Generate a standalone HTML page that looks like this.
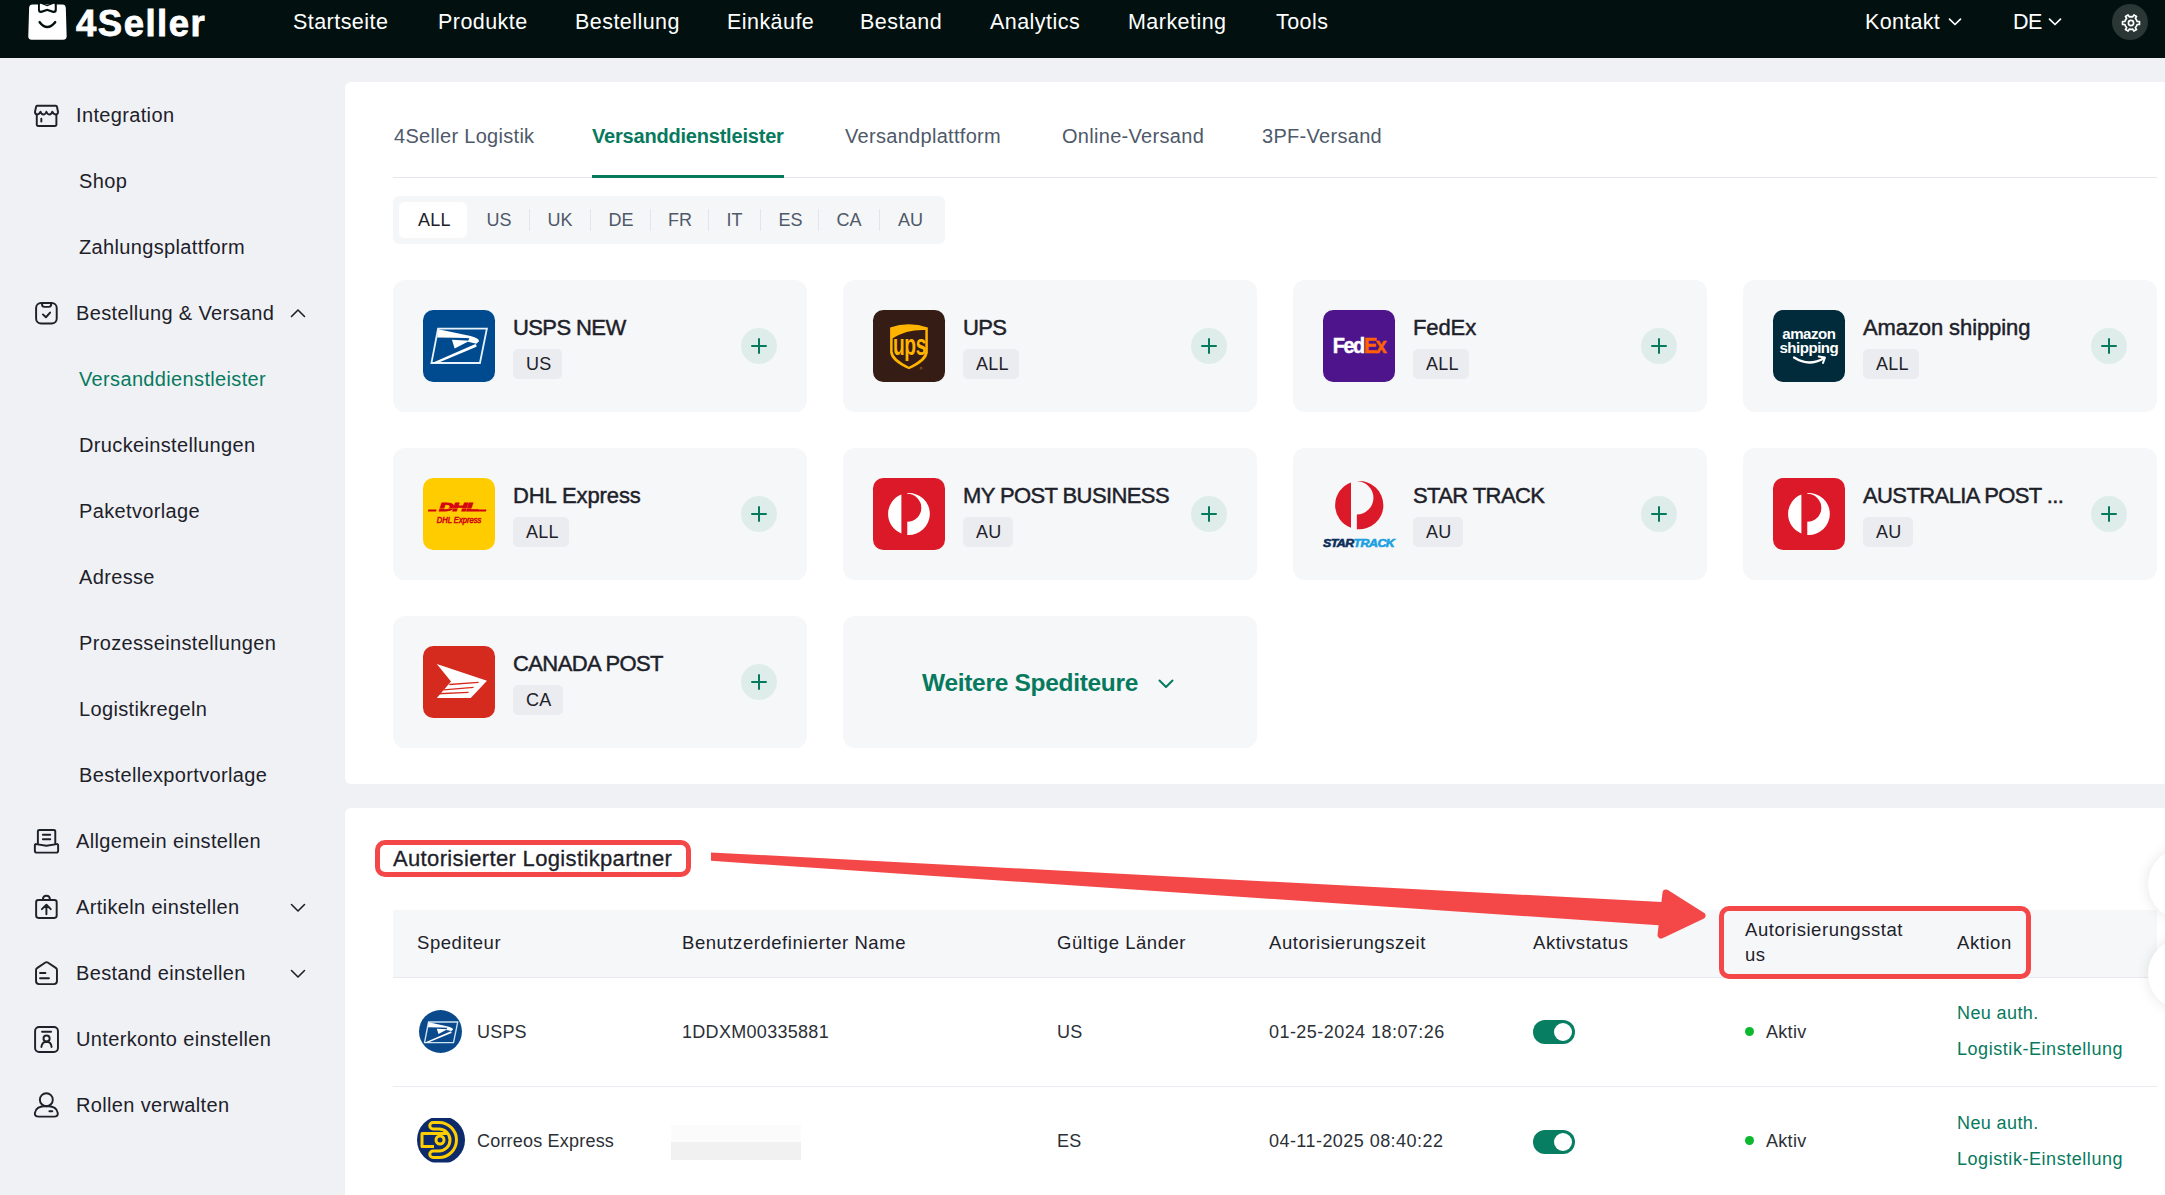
<!DOCTYPE html><html><head><meta charset="utf-8"><style>
html,body{margin:0;padding:0;}
body{width:2165px;height:1195px;overflow:hidden;position:relative;background:#f0f1f5;font-family:"Liberation Sans",sans-serif;}
.t{position:absolute;line-height:1;white-space:nowrap;}
.r{position:absolute;}
.s{position:absolute;overflow:visible;}
</style></head><body>
<div class="r" style="left:0px;top:0px;width:2165px;height:58px;background:#02110f;border-radius:0px;"></div>
<svg class="s" style="left:20px;top:0px;" width="60" height="50" viewBox="0 0 1434 1195">
<path d="M300,110 L1010,110 Q1090,110 1095,190 L1115,860 Q1118,950 1030,950 L280,950 Q195,950 198,860 L218,190 Q222,110 300,110 Z" fill="#fff"/>
<path d="M430,110 Q430,55 490,68 L650,118 L810,68 Q880,55 880,110 L880,235 Q880,320 790,312 L650,262 L510,312 Q430,320 430,235 Z" fill="#02110f"/>
<path d="M495,92 L650,150 L805,92 Q830,90 830,115 L830,230 Q830,262 800,256 L650,212 L500,256 Q475,262 475,230 L475,115 Q475,90 495,92 Z" fill="#fff"/>
<path d="M470,530 Q650,760 840,530" fill="none" stroke="#02110f" stroke-width="60" stroke-linecap="round"/>
</svg>
<div class="t" style="left:76px;top:6px;font-size:36.5px;color:#fff;font-weight:700;letter-spacing:1.5px;-webkit-text-stroke:0.8px #fff;">4Seller</div>
<div class="t" style="left:293px;top:12px;font-size:21.5px;color:#fff;letter-spacing:0.45px;">Startseite</div>
<div class="t" style="left:438px;top:12px;font-size:21.5px;color:#fff;letter-spacing:0.45px;">Produkte</div>
<div class="t" style="left:575px;top:12px;font-size:21.5px;color:#fff;letter-spacing:0.45px;">Bestellung</div>
<div class="t" style="left:727px;top:12px;font-size:21.5px;color:#fff;letter-spacing:0.45px;">Einkäufe</div>
<div class="t" style="left:860px;top:12px;font-size:21.5px;color:#fff;letter-spacing:0.45px;">Bestand</div>
<div class="t" style="left:990px;top:12px;font-size:21.5px;color:#fff;letter-spacing:0.45px;">Analytics</div>
<div class="t" style="left:1128px;top:12px;font-size:21.5px;color:#fff;letter-spacing:0.45px;">Marketing</div>
<div class="t" style="left:1276px;top:12px;font-size:21.5px;color:#fff;letter-spacing:0.45px;">Tools</div>
<div class="t" style="left:1865px;top:12px;font-size:21.5px;color:#fff;letter-spacing:0.3px;">Kontakt</div>
<div class="t" style="left:2013px;top:12px;font-size:21.5px;color:#fff;letter-spacing:-0.5px;">DE</div>
<svg class="s" style="left:1948px;top:18px;" width="14" height="8" viewBox="0 0 14 8"><path d="M1.5,1.2 L7,6.5 L12.5,1.2" fill="none" stroke="#fff" stroke-width="1.7" stroke-linecap="round" stroke-linejoin="round"/></svg>
<svg class="s" style="left:2048px;top:18px;" width="14" height="8" viewBox="0 0 14 8"><path d="M1.5,1.2 L7,6.5 L12.5,1.2" fill="none" stroke="#fff" stroke-width="1.7" stroke-linecap="round" stroke-linejoin="round"/></svg>
<div class="r" style="left:2112px;top:4px;width:36px;height:36px;background:#2a3734;border-radius:18px;"></div>
<svg class="s" style="left:2120.5px;top:12.5px;" width="20" height="20" viewBox="0 0 20 20"><path d="M15.46,6.85 L16.11,8.48 L18.47,8.51 L18.47,11.49 L16.11,11.52 L15.46,13.15 L14.38,14.53 L15.53,16.59 L12.94,18.08 L11.74,16.06 L10.00,16.30 L8.26,16.06 L7.06,18.08 L4.47,16.59 L5.62,14.53 L4.54,13.15 L3.89,11.52 L1.53,11.49 L1.53,8.51 L3.89,8.48 L4.54,6.85 L5.62,5.47 L4.47,3.41 L7.06,1.92 L8.26,3.94 L10.00,3.70 L11.74,3.94 L12.94,1.92 L15.53,3.41 L14.38,5.47 Z" fill="none" stroke="#fff" stroke-width="1.7" stroke-linejoin="round"/><circle cx="10" cy="10" r="2.6" fill="none" stroke="#fff" stroke-width="1.7"/></svg>
<div class="t" style="left:76px;top:105px;font-size:20px;color:#1d2129;letter-spacing:0.35px;">Integration</div>
<svg class="s" style="left:28px;top:95px;" width="40" height="40" viewBox="0 0 1195 1195"><path d="M270,320 L830,320 Q860,320 868,360 L895,500 Q905,570 830,580 Q760,585 725,500 Q700,580 640,585 Q580,585 550,500 Q520,585 460,585 Q400,580 375,500 Q340,585 270,580 Q200,570 210,500 L240,360 Q248,320 270,320 Z" fill="none" stroke="#1d2129" stroke-width="58" stroke-linecap="round" stroke-linejoin="round"/><path d="M262,590 L262,880 Q262,925 310,925 L800,925 Q848,925 848,880 L848,590" fill="none" stroke="#1d2129" stroke-width="58" stroke-linecap="round" stroke-linejoin="round"/><path d="M398,712 L398,790" fill="none" stroke="#1d2129" stroke-width="58" stroke-linecap="round" stroke-linejoin="round"/></svg>
<div class="t" style="left:79px;top:171px;font-size:20px;color:#1d2129;letter-spacing:0.35px;">Shop</div>
<div class="t" style="left:79px;top:237px;font-size:20px;color:#1d2129;letter-spacing:0.35px;">Zahlungsplattform</div>
<div class="t" style="left:76px;top:303px;font-size:20px;color:#1d2129;letter-spacing:0.35px;">Bestellung &amp; Versand</div>
<svg class="s" style="left:28px;top:295px;" width="40" height="40" viewBox="0 0 1195 1195"><rect x="242" y="237" width="616" height="616" rx="150" fill="none" stroke="#1d2129" stroke-width="58" stroke-linecap="round" stroke-linejoin="round"/><path d="M420,240 L420,285 Q420,355 490,355 L620,355 Q690,355 690,285 L690,240" fill="none" stroke="#1d2129" stroke-width="58" stroke-linecap="round" stroke-linejoin="round"/><path d="M445,580 L535,665 L660,525" fill="none" stroke="#1d2129" stroke-width="58" stroke-linecap="round" stroke-linejoin="round"/></svg>
<div class="t" style="left:79px;top:369px;font-size:20px;color:#077a5e;letter-spacing:0.35px;">Versanddienstleister</div>
<div class="t" style="left:79px;top:435px;font-size:20px;color:#1d2129;letter-spacing:0.35px;">Druckeinstellungen</div>
<div class="t" style="left:79px;top:501px;font-size:20px;color:#1d2129;letter-spacing:0.35px;">Paketvorlage</div>
<div class="t" style="left:79px;top:567px;font-size:20px;color:#1d2129;letter-spacing:0.35px;">Adresse</div>
<div class="t" style="left:79px;top:633px;font-size:20px;color:#1d2129;letter-spacing:0.35px;">Prozesseinstellungen</div>
<div class="t" style="left:79px;top:699px;font-size:20px;color:#1d2129;letter-spacing:0.35px;">Logistikregeln</div>
<div class="t" style="left:79px;top:765px;font-size:20px;color:#1d2129;letter-spacing:0.35px;">Bestellexportvorlage</div>
<div class="t" style="left:76px;top:831px;font-size:20px;color:#1d2129;letter-spacing:0.35px;">Allgemein einstellen</div>
<svg class="s" style="left:28px;top:820px;" width="40" height="40" viewBox="0 0 1195 1195"><path d="M295,700 L295,345 Q295,300 345,300 L765,300 Q815,300 815,345 L815,700" fill="none" stroke="#1d2129" stroke-width="58" stroke-linecap="round" stroke-linejoin="round"/><path d="M445,442 L665,442 M445,577 L665,577" fill="none" stroke="#1d2129" stroke-width="58" stroke-linecap="round" stroke-linejoin="round"/><path d="M240,720 L550,770 L860,720 Q900,715 900,760 L900,920 Q900,975 845,975 L260,975 Q205,975 205,920 L205,760 Q205,715 240,720 Z" fill="none" stroke="#1d2129" stroke-width="58" stroke-linecap="round" stroke-linejoin="round"/></svg>
<div class="t" style="left:76px;top:897px;font-size:20px;color:#1d2129;letter-spacing:0.35px;">Artikeln einstellen</div>
<svg class="s" style="left:28px;top:886px;" width="40" height="40" viewBox="0 0 1195 1195"><rect x="243" y="420" width="614" height="535" rx="70" fill="none" stroke="#1d2129" stroke-width="58" stroke-linecap="round" stroke-linejoin="round"/><path d="M445,410 Q445,290 550,290 Q655,290 655,410" fill="none" stroke="#1d2129" stroke-width="58" stroke-linecap="round" stroke-linejoin="round"/><path d="M550,845 L550,575 M415,690 L550,560 L680,690" fill="none" stroke="#1d2129" stroke-width="58" stroke-linecap="round" stroke-linejoin="round"/></svg>
<div class="t" style="left:76px;top:963px;font-size:20px;color:#1d2129;letter-spacing:0.35px;">Bestand einstellen</div>
<svg class="s" style="left:28px;top:952px;" width="40" height="40" viewBox="0 0 1195 1195"><path d="M240,540 Q240,500 280,475 L520,315 Q555,292 590,315 L830,475 Q865,500 865,540 L865,870 Q865,960 775,960 L330,960 Q240,960 240,870 Z" fill="none" stroke="#1d2129" stroke-width="58" stroke-linecap="round" stroke-linejoin="round"/><path d="M360,627 L520,627 M360,785 L625,785" fill="none" stroke="#1d2129" stroke-width="58" stroke-linecap="round" stroke-linejoin="round"/></svg>
<div class="t" style="left:76px;top:1029px;font-size:20px;color:#1d2129;letter-spacing:0.35px;">Unterkonto einstellen</div>
<svg class="s" style="left:28px;top:1018px;" width="40" height="40" viewBox="0 0 1195 1195"><rect x="212" y="267" width="683" height="748" rx="120" fill="none" stroke="#1d2129" stroke-width="58" stroke-linecap="round" stroke-linejoin="round"/><path d="M420,410 L690,410" fill="none" stroke="#1d2129" stroke-width="58" stroke-linecap="round" stroke-linejoin="round"/><circle cx="555" cy="612" r="92" fill="none" stroke="#1d2129" stroke-width="58" stroke-linecap="round" stroke-linejoin="round"/><path d="M400,865 Q420,715 555,712 Q690,715 705,865" fill="none" stroke="#1d2129" stroke-width="58" stroke-linecap="round" stroke-linejoin="round"/></svg>
<div class="t" style="left:76px;top:1095px;font-size:20px;color:#1d2129;letter-spacing:0.35px;">Rollen verwalten</div>
<svg class="s" style="left:28px;top:1084px;" width="40" height="40" viewBox="0 0 1195 1195"><circle cx="548" cy="470" r="193" fill="none" stroke="#1d2129" stroke-width="58" stroke-linecap="round" stroke-linejoin="round"/><path d="M205,870 Q230,665 548,660 Q865,665 890,870 Q900,975 780,975 L320,975 Q195,975 205,870 Z" fill="none" stroke="#1d2129" stroke-width="58" stroke-linecap="round" stroke-linejoin="round"/><path d="M640,815 L725,815" fill="none" stroke="#1d2129" stroke-width="58" stroke-linecap="round" stroke-linejoin="round"/></svg>
<svg class="s" style="left:290px;top:308px;" width="16" height="10" viewBox="0 0 16 10"><path d="M1.5,8.5 L8,2 L14.5,8.5" fill="none" stroke="#1d2129" stroke-width="1.6" stroke-linecap="round" stroke-linejoin="round"/></svg>
<svg class="s" style="left:290px;top:903px;" width="16" height="10" viewBox="0 0 16 10"><path d="M1.5,1.5 L8,8 L14.5,1.5" fill="none" stroke="#1d2129" stroke-width="1.6" stroke-linecap="round" stroke-linejoin="round"/></svg>
<svg class="s" style="left:290px;top:969px;" width="16" height="10" viewBox="0 0 16 10"><path d="M1.5,1.5 L8,8 L14.5,1.5" fill="none" stroke="#1d2129" stroke-width="1.6" stroke-linecap="round" stroke-linejoin="round"/></svg>
<div class="r" style="left:345px;top:82px;width:1900px;height:702px;background:#fff;border-radius:6px;"></div>
<div class="t" style="left:394px;top:126px;font-size:20px;color:#4e5969;letter-spacing:0.3px;">4Seller Logistik</div>
<div class="t" style="left:592px;top:126px;font-size:20px;color:#077a5e;font-weight:700;letter-spacing:-0.2px;">Versanddienstleister</div>
<div class="t" style="left:845px;top:126px;font-size:20px;color:#4e5969;letter-spacing:0.3px;">Versandplattform</div>
<div class="t" style="left:1062px;top:126px;font-size:20px;color:#4e5969;letter-spacing:0.3px;">Online-Versand</div>
<div class="t" style="left:1262px;top:126px;font-size:20px;color:#4e5969;letter-spacing:0.3px;">3PF-Versand</div>
<div class="r" style="left:393px;top:177px;width:1764px;height:1px;background:#e5e6eb;border-radius:0px;"></div>
<div class="r" style="left:592px;top:175px;width:192px;height:3px;background:#077a5e;border-radius:0px;"></div>
<div class="r" style="left:393px;top:196px;width:552px;height:48px;background:#f5f6f8;border-radius:6px;"></div>
<div class="r" style="left:399px;top:202px;width:68px;height:36px;background:#fff;border-radius:6px;"></div>
<div class="t" style="left:418px;top:211px;font-size:18px;color:#1d2129;letter-spacing:0.3px;">ALL</div>
<div class="t" style="left:486.6px;top:211px;font-size:18px;color:#4e5969;">US</div>
<div class="t" style="left:547.4px;top:211px;font-size:18px;color:#4e5969;">UK</div>
<div class="t" style="left:608.5px;top:211px;font-size:18px;color:#4e5969;">DE</div>
<div class="t" style="left:668px;top:211px;font-size:18px;color:#4e5969;">FR</div>
<div class="t" style="left:726.5px;top:211px;font-size:18px;color:#4e5969;">IT</div>
<div class="t" style="left:778.6px;top:211px;font-size:18px;color:#4e5969;">ES</div>
<div class="t" style="left:836.6px;top:211px;font-size:18px;color:#4e5969;">CA</div>
<div class="t" style="left:898px;top:211px;font-size:18px;color:#4e5969;">AU</div>
<div class="r" style="left:528.5px;top:209px;width:1.2px;height:22px;background:#e2e4ee;border-radius:0px;"></div>
<div class="r" style="left:589.5px;top:209px;width:1.2px;height:22px;background:#e2e4ee;border-radius:0px;"></div>
<div class="r" style="left:649.5px;top:209px;width:1.2px;height:22px;background:#e2e4ee;border-radius:0px;"></div>
<div class="r" style="left:707.5px;top:209px;width:1.2px;height:22px;background:#e2e4ee;border-radius:0px;"></div>
<div class="r" style="left:759.5px;top:209px;width:1.2px;height:22px;background:#e2e4ee;border-radius:0px;"></div>
<div class="r" style="left:818.0px;top:209px;width:1.2px;height:22px;background:#e2e4ee;border-radius:0px;"></div>
<div class="r" style="left:878.9px;top:209px;width:1.2px;height:22px;background:#e2e4ee;border-radius:0px;"></div>
<div class="r" style="left:393px;top:280px;width:414px;height:132px;background:#f6f7f9;border-radius:12px;"></div>
<svg class="s" style="left:423px;top:310px;" width="72" height="72" viewBox="0 0 1195 1195"><rect width="1195" height="1195" rx="170" fill="#004b8f"/>
<path d="M250,310 L1060,310 L945,880 L140,880 Z" fill="none" stroke="#e8f2fb" stroke-width="30"/>
<path d="M255,318 L790,432 Q935,470 930,520 L885,560 L745,528 L770,468 Q700,456 235,455 Z" fill="#fff"/>
<path d="M150,880 L870,565 Q895,580 888,612 L245,880 Z" fill="#fff"/>
<path d="M480,495 L775,512 L525,640 Z" fill="#fff"/></svg>
<div class="t" style="left:513px;top:317px;font-size:22px;color:#1d2129;letter-spacing:-0.6px;-webkit-text-stroke:0.45px #1d2129;">USPS NEW</div>
<div class="r" style="left:513px;top:349px;width:49px;height:30px;background:#ebecf0;border-radius:5px;"></div>
<div class="t" style="left:526px;top:355px;font-size:18px;color:#1d2129;letter-spacing:0.2px;">US</div>
<div class="r" style="left:741px;top:328px;width:36px;height:36px;background:#deedea;border-radius:18px;"></div>
<div class="r" style="left:751px;top:345px;width:16px;height:2px;background:#077a5e;border-radius:1px;"></div>
<div class="r" style="left:758px;top:338px;width:2px;height:16px;background:#077a5e;border-radius:1px;"></div>
<div class="r" style="left:843px;top:280px;width:414px;height:132px;background:#f6f7f9;border-radius:12px;"></div>
<svg class="s" style="left:873px;top:310px;" width="72" height="72" viewBox="0 0 1195 1195"><rect width="1195" height="1195" rx="170" fill="#351c15"/>
<path d="M284,292 Q590,185 910,292 L910,700 Q900,850 597,985 Q294,850 284,700 Z" fill="#ffb500"/>
<path d="M326,470 Q560,320 868,332 L868,690 Q858,815 597,940 Q336,815 326,690 Z" fill="#351c15"/>
<text x="0" y="742" font-family="Liberation Sans" font-weight="700" font-size="480" fill="#ffb500" letter-spacing="-8" transform="translate(330 0) scale(0.665 1)">ups</text>
<circle cx="798" cy="966" r="16" fill="none" stroke="#ffb500" stroke-width="6"/></svg>
<div class="t" style="left:963px;top:317px;font-size:22px;color:#1d2129;letter-spacing:-0.6px;-webkit-text-stroke:0.45px #1d2129;">UPS</div>
<div class="r" style="left:963px;top:349px;width:56px;height:30px;background:#ebecf0;border-radius:5px;"></div>
<div class="t" style="left:976px;top:355px;font-size:18px;color:#1d2129;letter-spacing:0.2px;">ALL</div>
<div class="r" style="left:1191px;top:328px;width:36px;height:36px;background:#deedea;border-radius:18px;"></div>
<div class="r" style="left:1201px;top:345px;width:16px;height:2px;background:#077a5e;border-radius:1px;"></div>
<div class="r" style="left:1208px;top:338px;width:2px;height:16px;background:#077a5e;border-radius:1px;"></div>
<div class="r" style="left:1293px;top:280px;width:414px;height:132px;background:#f6f7f9;border-radius:12px;"></div>
<svg class="s" style="left:1323px;top:310px;" width="72" height="72" viewBox="0 0 1195 1195"><rect width="1195" height="1195" rx="170" fill="#4d148c"/>
<g transform="translate(160 0) scale(0.89 1)"><text x="0" y="722" font-family="Liberation Sans" font-weight="700" font-size="372" letter-spacing="-26" fill="#fff" stroke="#fff" stroke-width="8">Fed<tspan fill="#ff6200" stroke="#ff6200">Ex</tspan></text></g></svg>
<div class="t" style="left:1413px;top:317px;font-size:22px;color:#1d2129;letter-spacing:-0.1px;-webkit-text-stroke:0.45px #1d2129;">FedEx</div>
<div class="r" style="left:1413px;top:349px;width:56px;height:30px;background:#ebecf0;border-radius:5px;"></div>
<div class="t" style="left:1426px;top:355px;font-size:18px;color:#1d2129;letter-spacing:0.2px;">ALL</div>
<div class="r" style="left:1641px;top:328px;width:36px;height:36px;background:#deedea;border-radius:18px;"></div>
<div class="r" style="left:1651px;top:345px;width:16px;height:2px;background:#077a5e;border-radius:1px;"></div>
<div class="r" style="left:1658px;top:338px;width:2px;height:16px;background:#077a5e;border-radius:1px;"></div>
<div class="r" style="left:1743px;top:280px;width:414px;height:132px;background:#f6f7f9;border-radius:12px;"></div>
<svg class="s" style="left:1773px;top:310px;" width="72" height="72" viewBox="0 0 1195 1195"><rect width="1195" height="1195" rx="170" fill="#012a3b"/>
<text x="595" y="488" text-anchor="middle" font-family="Liberation Sans" font-weight="700" font-size="250" fill="#fff" letter-spacing="-8">amazon</text>
<text x="595" y="712" text-anchor="middle" font-family="Liberation Sans" font-weight="700" font-size="250" fill="#fff" letter-spacing="-8">shipping</text>
<path d="M350,790 Q600,950 850,795" fill="none" stroke="#fff" stroke-width="40" stroke-linecap="round"/>
<path d="M760,770 L860,790 L830,880" fill="none" stroke="#fff" stroke-width="34" stroke-linecap="round" stroke-linejoin="round"/></svg>
<div class="t" style="left:1863px;top:317px;font-size:22px;color:#1d2129;letter-spacing:-0.1px;-webkit-text-stroke:0.45px #1d2129;">Amazon shipping</div>
<div class="r" style="left:1863px;top:349px;width:56px;height:30px;background:#ebecf0;border-radius:5px;"></div>
<div class="t" style="left:1876px;top:355px;font-size:18px;color:#1d2129;letter-spacing:0.2px;">ALL</div>
<div class="r" style="left:2091px;top:328px;width:36px;height:36px;background:#deedea;border-radius:18px;"></div>
<div class="r" style="left:2101px;top:345px;width:16px;height:2px;background:#077a5e;border-radius:1px;"></div>
<div class="r" style="left:2108px;top:338px;width:2px;height:16px;background:#077a5e;border-radius:1px;"></div>
<div class="r" style="left:393px;top:448px;width:414px;height:132px;background:#f6f7f9;border-radius:12px;"></div>
<svg class="s" style="left:423px;top:478px;" width="72" height="72" viewBox="0 0 1195 1195"><rect width="1195" height="1195" rx="170" fill="#ffcc00"/>
<path d="M88,522 L225,522 L218,555 L82,555 Z M915,522 L1052,522 L1046,555 L908,555 Z" fill="#d40511"/>
<text x="590" y="555" text-anchor="middle" font-family="Liberation Sans" font-weight="700" font-style="italic" font-size="185" fill="#d40511" stroke="#d40511" stroke-width="16" letter-spacing="-8" transform="translate(590 0) scale(1.8 1) translate(-590 0)">DHL</text>
<path d="M250,505 L960,505" stroke="#ffcc00" stroke-width="7"/>
<text x="597" y="742" text-anchor="middle" font-family="Liberation Sans" font-style="italic" font-size="140" fill="#d40511" stroke="#d40511" stroke-width="9" transform="translate(597 0) scale(0.9 1) translate(-597 0)">DHL Express</text></svg>
<div class="t" style="left:513px;top:485px;font-size:22px;color:#1d2129;letter-spacing:-0.1px;-webkit-text-stroke:0.45px #1d2129;">DHL Express</div>
<div class="r" style="left:513px;top:517px;width:56px;height:30px;background:#ebecf0;border-radius:5px;"></div>
<div class="t" style="left:526px;top:523px;font-size:18px;color:#1d2129;letter-spacing:0.2px;">ALL</div>
<div class="r" style="left:741px;top:496px;width:36px;height:36px;background:#deedea;border-radius:18px;"></div>
<div class="r" style="left:751px;top:513px;width:16px;height:2px;background:#077a5e;border-radius:1px;"></div>
<div class="r" style="left:758px;top:506px;width:2px;height:16px;background:#077a5e;border-radius:1px;"></div>
<div class="r" style="left:843px;top:448px;width:414px;height:132px;background:#f6f7f9;border-radius:12px;"></div>
<svg class="s" style="left:873px;top:478px;" width="72" height="72" viewBox="0 0 1195 1195"><rect width="1195" height="1195" rx="170" fill="#dc1928"/>
<path d="M471,273 A348,348 0 0 0 471,921 Z" fill="#fff"/>
<path d="M569,250 A348,348 0 1 1 569,944 L569,728 A233,233 0 0 0 569,262 Z" fill="#fff"/></svg>
<div class="t" style="left:963px;top:485px;font-size:22px;color:#1d2129;letter-spacing:-0.6px;-webkit-text-stroke:0.45px #1d2129;">MY POST BUSINESS</div>
<div class="r" style="left:963px;top:517px;width:50px;height:30px;background:#ebecf0;border-radius:5px;"></div>
<div class="t" style="left:976px;top:523px;font-size:18px;color:#1d2129;letter-spacing:0.2px;">AU</div>
<div class="r" style="left:1191px;top:496px;width:36px;height:36px;background:#deedea;border-radius:18px;"></div>
<div class="r" style="left:1201px;top:513px;width:16px;height:2px;background:#077a5e;border-radius:1px;"></div>
<div class="r" style="left:1208px;top:506px;width:2px;height:16px;background:#077a5e;border-radius:1px;"></div>
<div class="r" style="left:1293px;top:448px;width:414px;height:132px;background:#f6f7f9;border-radius:12px;"></div>
<svg class="s" style="left:1323px;top:478px;" width="72" height="72" viewBox="0 0 1195 1195">
<path d="M465,75 A400,400 0 0 0 465,827 Z" fill="#dc1928"/>
<path d="M562,53 A400,400 0 1 1 562,849 L562,605 A275,275 0 0 0 562,55 Z" fill="#dc1928"/>
<text x="0" y="1138" font-family="Liberation Sans" font-weight="700" font-style="italic" font-size="182" letter-spacing="-8" stroke-width="10" transform="scale(1.13 1)"><tspan fill="#0b2f5b" stroke="#0b2f5b">STAR</tspan><tspan fill="#1aa0e0" stroke="#1aa0e0">TRACK</tspan></text></svg>
<div class="t" style="left:1413px;top:485px;font-size:22px;color:#1d2129;letter-spacing:-0.6px;-webkit-text-stroke:0.45px #1d2129;">STAR TRACK</div>
<div class="r" style="left:1413px;top:517px;width:50px;height:30px;background:#ebecf0;border-radius:5px;"></div>
<div class="t" style="left:1426px;top:523px;font-size:18px;color:#1d2129;letter-spacing:0.2px;">AU</div>
<div class="r" style="left:1641px;top:496px;width:36px;height:36px;background:#deedea;border-radius:18px;"></div>
<div class="r" style="left:1651px;top:513px;width:16px;height:2px;background:#077a5e;border-radius:1px;"></div>
<div class="r" style="left:1658px;top:506px;width:2px;height:16px;background:#077a5e;border-radius:1px;"></div>
<div class="r" style="left:1743px;top:448px;width:414px;height:132px;background:#f6f7f9;border-radius:12px;"></div>
<svg class="s" style="left:1773px;top:478px;" width="72" height="72" viewBox="0 0 1195 1195"><rect width="1195" height="1195" rx="170" fill="#dc1928"/>
<path d="M471,273 A348,348 0 0 0 471,921 Z" fill="#fff"/>
<path d="M569,250 A348,348 0 1 1 569,944 L569,728 A233,233 0 0 0 569,262 Z" fill="#fff"/></svg>
<div class="t" style="left:1863px;top:485px;font-size:22px;color:#1d2129;letter-spacing:-0.6px;-webkit-text-stroke:0.45px #1d2129;">AUSTRALIA POST ...</div>
<div class="r" style="left:1863px;top:517px;width:50px;height:30px;background:#ebecf0;border-radius:5px;"></div>
<div class="t" style="left:1876px;top:523px;font-size:18px;color:#1d2129;letter-spacing:0.2px;">AU</div>
<div class="r" style="left:2091px;top:496px;width:36px;height:36px;background:#deedea;border-radius:18px;"></div>
<div class="r" style="left:2101px;top:513px;width:16px;height:2px;background:#077a5e;border-radius:1px;"></div>
<div class="r" style="left:2108px;top:506px;width:2px;height:16px;background:#077a5e;border-radius:1px;"></div>
<div class="r" style="left:393px;top:616px;width:414px;height:132px;background:#f6f7f9;border-radius:12px;"></div>
<svg class="s" style="left:423px;top:646px;" width="72" height="72" viewBox="0 0 1195 1195"><rect width="1195" height="1195" rx="170" fill="#d52b1e"/>
<path d="M229,299 L1062,576 L792,861 L229,861 L465,590 Z" fill="#fff"/>
<path d="M437,639 L923,604 M340,729 L840,687 M242,792 L757,770" stroke="#d52b1e" stroke-width="22"/></svg>
<div class="t" style="left:513px;top:653px;font-size:22px;color:#1d2129;letter-spacing:-0.6px;-webkit-text-stroke:0.45px #1d2129;">CANADA POST</div>
<div class="r" style="left:513px;top:685px;width:50px;height:30px;background:#ebecf0;border-radius:5px;"></div>
<div class="t" style="left:526px;top:691px;font-size:18px;color:#1d2129;letter-spacing:0.2px;">CA</div>
<div class="r" style="left:741px;top:664px;width:36px;height:36px;background:#deedea;border-radius:18px;"></div>
<div class="r" style="left:751px;top:681px;width:16px;height:2px;background:#077a5e;border-radius:1px;"></div>
<div class="r" style="left:758px;top:674px;width:2px;height:16px;background:#077a5e;border-radius:1px;"></div>
<div class="r" style="left:843px;top:616px;width:414px;height:132px;background:#f6f7f9;border-radius:12px;"></div>
<div class="t" style="left:922px;top:671px;font-size:24.5px;color:#077a5e;font-weight:700;letter-spacing:-0.3px;">Weitere Spediteure</div>
<svg class="s" style="left:1158px;top:679px;" width="16" height="10" viewBox="0 0 16 10"><path d="M1.5,1.5 L8,8 L14.5,1.5" fill="none" stroke="#077a5e" stroke-width="2" stroke-linecap="round" stroke-linejoin="round"/></svg>
<div class="r" style="left:345px;top:808px;width:1900px;height:500px;background:#fff;border-radius:6px;"></div>
<div class="t" style="left:393px;top:848px;font-size:22px;color:#1d2129;letter-spacing:0.35px;-webkit-text-stroke:0.3px #1d2129;">Autorisierter Logistikpartner</div>
<div class="r" style="left:393px;top:910px;width:1764px;height:67px;background:#f6f7f9;border-radius:0px;"></div>
<div class="r" style="left:393px;top:977px;width:1764px;height:1px;background:#e8e9ee;border-radius:0px;"></div>
<div class="t" style="left:417px;top:934px;font-size:18.5px;color:#1d2129;letter-spacing:0.55px;">Spediteur</div>
<div class="t" style="left:682px;top:934px;font-size:18.5px;color:#1d2129;letter-spacing:0.55px;">Benutzerdefinierter Name</div>
<div class="t" style="left:1057px;top:934px;font-size:18.5px;color:#1d2129;letter-spacing:0.55px;">Gültige Länder</div>
<div class="t" style="left:1269px;top:934px;font-size:18.5px;color:#1d2129;letter-spacing:0.55px;">Autorisierungszeit</div>
<div class="t" style="left:1533px;top:934px;font-size:18.5px;color:#1d2129;letter-spacing:0.55px;">Aktivstatus</div>
<div class="t" style="left:1957px;top:934px;font-size:18.5px;color:#1d2129;letter-spacing:0.55px;">Aktion</div>
<div class="t" style="left:1745px;top:921px;font-size:18.5px;color:#1d2129;letter-spacing:0.55px;">Autorisierungsstat</div>
<div class="t" style="left:1745px;top:946px;font-size:18.5px;color:#1d2129;letter-spacing:0.55px;">us</div>
<div class="r" style="left:393px;top:1086px;width:1764px;height:1px;background:#ebebf2;border-radius:0px;"></div>
<svg class="s" style="left:419px;top:1010px" width="43" height="43" viewBox="0 0 1195 1195"><circle cx="597" cy="597" r="597" fill="#0a4a8c"/><g transform="translate(15 25)"><path d="M250,310 L1060,310 L945,880 L140,880 Z" fill="none" stroke="#cfe3f5" stroke-width="38"/><path d="M480,495 L775,512 L525,640 Z" fill="#fff"/><path d="M255,318 L790,432 Q935,470 930,520 L885,560 L745,528 L770,468 Q700,456 235,455 Z" fill="#fff"/><path d="M150,880 L870,565 Q895,580 888,612 L245,880 Z" fill="#fff"/></g></svg>
<div class="t" style="left:477px;top:1023px;font-size:18px;color:#2b2f36;letter-spacing:0.2px;">USPS</div>
<div class="t" style="left:682px;top:1023px;font-size:18px;color:#2b2f36;letter-spacing:0.3px;">1DDXM00335881</div>
<div class="t" style="left:1057px;top:1023px;font-size:18px;color:#2b2f36;letter-spacing:0.3px;">US</div>
<div class="t" style="left:1269px;top:1023px;font-size:18px;color:#2b2f36;letter-spacing:0.45px;">01-25-2024 18:07:26</div>
<div class="r" style="left:1533px;top:1020px;width:42px;height:24px;background:#077d61;border-radius:12px;"></div>
<div class="r" style="left:1554px;top:1023px;width:18px;height:18px;background:#fff;border-radius:9px;"></div>
<div class="r" style="left:1745px;top:1026.5px;width:9px;height:9px;background:#0bb82e;border-radius:5px;"></div>
<div class="t" style="left:1766px;top:1023px;font-size:18px;color:#2b2f36;letter-spacing:0.3px;">Aktiv</div>
<div class="t" style="left:1957px;top:1004px;font-size:18px;color:#077a5e;letter-spacing:0.4px;">Neu auth.</div>
<div class="t" style="left:1957px;top:1040px;font-size:18px;color:#077a5e;letter-spacing:0.55px;">Logistik-Einstellung</div>
<svg class="s" style="left:417px;top:1116px" width="48" height="48" viewBox="0 0 48 48"><defs><clipPath id="cc"><rect x="0" y="2" width="48" height="44.5"/></clipPath></defs><circle cx="24" cy="24" r="24" fill="#0d2a6b" clip-path="url(#cc)"/><g fill="none" stroke="#ffcd00" stroke-width="3" stroke-linejoin="round"><path d="M16,6.5 L22,6.5 A17.5,17.5 0 0 1 22,41.5 L16,41.5 A3.25,3.25 0 0 1 16,35 L22,35 A11,11 0 0 0 22,13 L16,13 A3.25,3.25 0 0 1 16,6.5 Z"/><path d="M31,17.5 L5,17.5 L5,30.5 L17,30.5"/><circle cx="23" cy="24" r="4"/></g></svg>
<div class="t" style="left:477px;top:1132px;font-size:18px;color:#2b2f36;letter-spacing:0.2px;">Correos Express</div>
<div class="t" style="left:1057px;top:1132px;font-size:18px;color:#2b2f36;letter-spacing:0.3px;">ES</div>
<div class="t" style="left:1269px;top:1132px;font-size:18px;color:#2b2f36;letter-spacing:0.45px;">04-11-2025 08:40:22</div>
<div class="r" style="left:1533px;top:1129.5px;width:42px;height:24px;background:#077d61;border-radius:12px;"></div>
<div class="r" style="left:1554px;top:1132.5px;width:18px;height:18px;background:#fff;border-radius:9px;"></div>
<div class="r" style="left:1745px;top:1136.0px;width:9px;height:9px;background:#0bb82e;border-radius:5px;"></div>
<div class="t" style="left:1766px;top:1132px;font-size:18px;color:#2b2f36;letter-spacing:0.3px;">Aktiv</div>
<div class="t" style="left:1957px;top:1114px;font-size:18px;color:#077a5e;letter-spacing:0.4px;">Neu auth.</div>
<div class="t" style="left:1957px;top:1150px;font-size:18px;color:#077a5e;letter-spacing:0.55px;">Logistik-Einstellung</div>
<div class="r" style="left:671px;top:1125px;width:130px;height:17px;background:#fbfbfb;border-radius:0px;"></div>
<div class="r" style="left:671px;top:1142px;width:130px;height:18px;background:#f1f1f1;border-radius:0px;"></div>
<div class="r" style="left:375px;top:840px;width:316px;height:37px;box-sizing:border-box;border:5.5px solid #f44848;border-radius:10px;"></div>
<div class="r" style="left:1719px;top:906px;width:312px;height:73px;box-sizing:border-box;border:5.5px solid #f44848;border-radius:10px;"></div>
<svg class="s" style="left:0px;top:0px;pointer-events:none;" width="2165" height="1195" viewBox="0 0 2165 1195"><path d="M711,852.4 L1662,902 L1662,925.5 L711,860.8 Z" fill="#f44848"/><path d="M1666,893 L1702,915.7 L1661,935 Z" fill="#f44848" stroke="#f44848" stroke-width="7" stroke-linejoin="round"/></svg>
<div class="r" style="left:2148px;top:848px;width:72px;height:72px;border-radius:36px;background:#fff;box-shadow:0 0 14px rgba(0,0,0,0.10);"></div>
<div class="r" style="left:2148px;top:938px;width:72px;height:72px;border-radius:36px;background:#fff;box-shadow:0 0 14px rgba(0,0,0,0.10);"></div>
</body></html>
